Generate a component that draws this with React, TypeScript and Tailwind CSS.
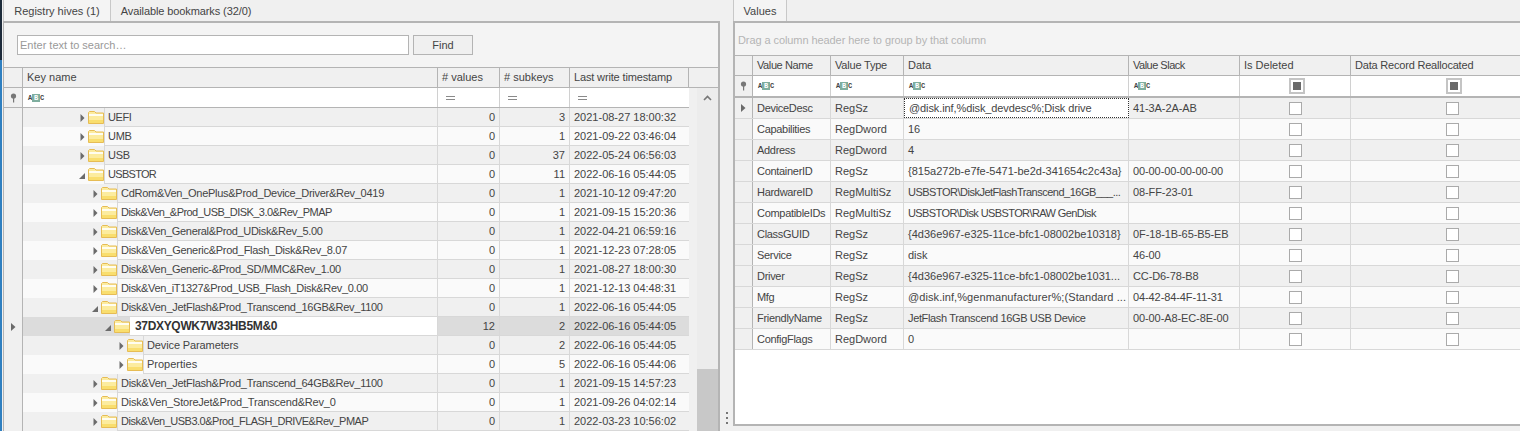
import React from 'react';

const font = "font-['Liberation_Sans',sans-serif]";

const keyRows = [
  { name: 'UEFI', level: 0, open: false, values: 0, subkeys: 3, ts: '2021-08-27 18:00:32', t: 'tracking-[-0.4px]' },
  { name: 'UMB', level: 0, open: false, values: 0, subkeys: 1, ts: '2021-09-22 03:46:04', t: 'tracking-[-0.3px]' },
  { name: 'USB', level: 0, open: false, values: 0, subkeys: 37, ts: '2022-05-24 06:56:03', t: 'tracking-[-0.3px]' },
  { name: 'USBSTOR', level: 0, open: true, values: 0, subkeys: 11, ts: '2022-06-16 05:44:05', t: 'tracking-[-0.7px]' },
  { name: 'CdRom&Ven_OnePlus&Prod_Device_Driver&Rev_0419', level: 1, open: false, values: 0, subkeys: 1, ts: '2021-10-12 09:47:20', t: 'tracking-[-0.27px]' },
  { name: 'Disk&Ven_&Prod_USB_DISK_3.0&Rev_PMAP', level: 1, open: false, values: 0, subkeys: 1, ts: '2021-09-15 15:20:36', t: 'tracking-[-0.55px]' },
  { name: 'Disk&Ven_General&Prod_UDisk&Rev_5.00', level: 1, open: false, values: 0, subkeys: 1, ts: '2022-04-21 06:59:16', t: 'tracking-[-0.33px]' },
  { name: 'Disk&Ven_Generic&Prod_Flash_Disk&Rev_8.07', level: 1, open: false, values: 0, subkeys: 1, ts: '2021-12-23 07:28:05', t: 'tracking-[-0.29px]' },
  { name: 'Disk&Ven_Generic-&Prod_SD/MMC&Rev_1.00', level: 1, open: false, values: 0, subkeys: 1, ts: '2021-08-27 18:00:30', t: 'tracking-[-0.31px]' },
  { name: 'Disk&Ven_iT1327&Prod_USB_Flash_Disk&Rev_0.00', level: 1, open: false, values: 0, subkeys: 1, ts: '2021-12-13 04:48:31', t: 'tracking-[-0.34px]' },
  { name: 'Disk&Ven_JetFlash&Prod_Transcend_16GB&Rev_1100', level: 1, open: true, values: 0, subkeys: 1, ts: '2022-06-16 05:44:05', t: 'tracking-[-0.28px]' },
  { name: '37DXYQWK7W33HB5M&0', level: 2, open: true, values: 12, subkeys: 2, ts: '2022-06-16 05:44:05', selected: true, t: 'tracking-[-0.33px]' },
  { name: 'Device Parameters', level: 3, open: false, values: 0, subkeys: 2, ts: '2022-06-16 05:44:05', t: 'tracking-[-0.12px]' },
  { name: 'Properties', level: 3, open: false, values: 0, subkeys: 5, ts: '2022-06-16 05:44:06', t: '' },
  { name: 'Disk&Ven_JetFlash&Prod_Transcend_64GB&Rev_1100', level: 1, open: false, values: 0, subkeys: 1, ts: '2021-09-15 14:57:23', t: 'tracking-[-0.28px]' },
  { name: 'Disk&Ven_StoreJet&Prod_Transcend&Rev_0', level: 1, open: false, values: 0, subkeys: 1, ts: '2021-09-26 04:02:14', t: 'tracking-[-0.2px]' },
  { name: 'Disk&Ven_USB3.0&Prod_FLASH_DRIVE&Rev_PMAP', level: 1, open: false, values: 0, subkeys: 1, ts: '2022-03-23 10:56:02', t: 'tracking-[-0.5px]' },
];

const valueRows = [
  ['DeviceDesc', 'RegSz', '@disk.inf,%disk_devdesc%;Disk drive', '41-3A-2A-AB', 'tracking-[-0.1px]'],
  ['Capabilities', 'RegDword', '16', '', ''],
  ['Address', 'RegDword', '4', '', ''],
  ['ContainerID', 'RegSz', '{815a272b-e7fe-5471-be2d-341654c2c43a}', '00-00-00-00-00-00', ''],
  ['HardwareID', 'RegMultiSz', 'USBSTOR\\DiskJetFlashTranscend_16GB___...', '08-FF-23-01', 'tracking-[-0.5px]'],
  ['CompatibleIDs', 'RegMultiSz', 'USBSTOR\\Disk USBSTOR\\RAW GenDisk', '', 'tracking-[-0.6px]'],
  ['ClassGUID', 'RegSz', '{4d36e967-e325-11ce-bfc1-08002be10318}', '0F-18-1B-65-B5-EB', ''],
  ['Service', 'RegSz', 'disk', '46-00', ''],
  ['Driver', 'RegSz', '{4d36e967-e325-11ce-bfc1-08002be1031...', 'CC-D6-78-B8', ''],
  ['Mfg', 'RegSz', '@disk.inf,%genmanufacturer%;(Standard ...', '04-42-84-4F-11-31', 'tracking-[0.08px]'],
  ['FriendlyName', 'RegSz', 'JetFlash Transcend 16GB USB Device', '00-00-A8-EC-8E-00', 'tracking-[-0.35px]'],
  ['ConfigFlags', 'RegDword', '0', '', ''],
];

const Folder = () => (
  <svg width="16" height="13" viewBox="0 0 16 13" className="shrink-0">
    <path d="M0.5 12.5V1.5L1.5 0.5H6.5L8 2H15.5V12.5Z" fill="#fcec9f" stroke="#e6bc55" />
    <rect x="1" y="3" width="14" height="2" fill="#fffdf0" />
    <rect x="1" y="9" width="14" height="3" fill="#f9de6e" />
  </svg>
);

const Arrow = ({ open }: { open: boolean }) =>
  open ? (
    <svg width="6" height="8" viewBox="0 0 6 8" className="shrink-0">
      <path d="M6 2V8H0Z" fill="#6b6b6b" />
    </svg>
  ) : (
    <svg width="5" height="8" viewBox="0 0 5 8" className="shrink-0">
      <path d="M0.5 0L4.5 4L0.5 8Z" fill="#6b6b6b" />
    </svg>
  );

const RowMark = () => (
  <svg width="5" height="8" viewBox="0 0 5 8">
    <path d="M0 0L4.5 4L0 8Z" fill="#6b6b6b" />
  </svg>
);

const AbcIcon = () => (
  <span className="flex items-center font-['Liberation_Mono',monospace] text-[7px] font-bold leading-[8px] text-[#444]">
    <span className="w-[4px] text-center">A</span>
    <span className="w-[8px] bg-[#7fae9f] text-center text-white">B</span>
    <span className="w-[4px] text-center">C</span>
  </span>
);

const Pin = () => (
  <svg width="7" height="10" viewBox="0 0 7 10">
    <circle cx="3.5" cy="3" r="2.6" fill="#777" />
    <rect x="3" y="5" width="1.2" height="4.5" fill="#777" />
  </svg>
);

const Equals = () => <span className="block h-[4px] w-[9px] border-y border-[#8a8a8a]" />;

const HeaderCell = ({ w, children }: { w: string; children?: React.ReactNode }) => (
  <div className={`flex shrink-0 items-center whitespace-nowrap border-r border-[#b4b4b4] pl-[4px] ${w}`}>
    {children}
  </div>
);

const KeysGrid = () => (
  <div className="flex min-h-0 flex-1 flex-col overflow-hidden">
    <div className="box-content flex h-[19px] shrink-0 border-y border-[#b4b4b4] bg-[#f0f0f0]">
      <HeaderCell w="w-[19px]" />
      <HeaderCell w="w-[415px]">Key name</HeaderCell>
      <HeaderCell w="w-[62px]">{'# values'}</HeaderCell>
      <HeaderCell w="w-[70px]">{'# subkeys'}</HeaderCell>
      <HeaderCell w="w-[119px] tracking-[-0.15px]">Last write timestamp</HeaderCell>
    </div>
    <div className="flex min-h-0 flex-1">
      <div className="w-[685px] shrink-0">
        <div className="flex h-[20px] border-b border-[#b4b4b4] bg-white">
          <div className="flex w-[19px] shrink-0 items-center justify-center border-r border-[#b4b4b4] bg-[#f0f0f0]"><Pin /></div>
          <div className="flex w-[415px] shrink-0 items-center border-r border-[#d0d0d0] pl-[5px]"><AbcIcon /></div>
          <div className="flex w-[62px] shrink-0 items-center border-r border-[#d0d0d0] pl-[8px]"><Equals /></div>
          <div className="flex w-[70px] shrink-0 items-center border-r border-[#d0d0d0] pl-[8px]"><Equals /></div>
          <div className="flex flex-1 items-center pl-[8px]"><Equals /></div>
        </div>
        {keyRows.map((r, i) => {
          const bg = r.selected ? 'bg-[#dcdcdc]' : i % 2 === 0 ? 'bg-[#f0f0f0]' : 'bg-[#fafafa]';
          return (
            <div key={r.name} className={`flex h-[19px] ${bg}`}>
              <div className="flex w-[19px] shrink-0 items-center justify-center border-r border-[#b4b4b4] bg-[#f0f0f0]">
                {r.selected && <RowMark />}
              </div>
              <div className="flex w-[415px] shrink-0 border-r border-[#d8d8d8]">
                <div
                  className="flex shrink-0 items-center justify-end gap-[3px]"
                  style={{ width: 81 + r.level * 13 }}
                >
                  <Arrow open={r.open} />
                  <Folder />
                </div>
                <div
                  className={`flex-1 truncate border-b border-l border-[#d8d8d8] leading-[18px] ${r.t} ${
                    r.selected ? 'border-l-0 bg-white pl-[5px] text-[12px] font-bold text-[#333]' : 'pl-[3px]'
                  }`}
                >
                  {r.name}
                </div>
              </div>
              <div className="w-[62px] shrink-0 border-b border-r border-[#d8d8d8] pr-[4px] text-right leading-[18px]">{r.values}</div>
              <div className="w-[70px] shrink-0 border-b border-r border-[#d8d8d8] pr-[4px] text-right leading-[18px]">{r.subkeys}</div>
              <div className="flex-1 border-b border-[#d8d8d8] pl-[4px] leading-[18px]">{r.ts}</div>
            </div>
          );
        })}
      </div>
      <div className="ml-[8px] flex w-[21px] shrink-0 flex-col bg-[#ececec]">
        <div className="flex h-[20px] shrink-0 items-center justify-center">
          <svg width="9" height="6" viewBox="0 0 9 6">
            <path d="M1 5L4.5 1.5L8 5" fill="none" stroke="#777" strokeWidth="1.6" />
          </svg>
        </div>
        <div className="flex-1" />
        <div className="h-[62px] shrink-0 bg-[#c8c8c8]" />
      </div>
    </div>
  </div>
);

const Check = () => <span className="ml-[49px] block h-[13px] w-[13px] border border-[#aaa] bg-white" />;

const CheckFilter = () => (
  <span className="ml-[49px] flex h-[16px] w-[16px] items-center justify-center border-2 border-[#c4c4c4] bg-white">
    <span className="block h-[8px] w-[8px] bg-[#6a6a6a]" />
  </span>
);

const vCols = ['w-[78px]', 'w-[73px]', 'w-[225px]', 'w-[111px]', 'w-[111px]', 'w-[203px]'];

const ValuesGrid = () => (
  <div className="flex min-h-0 flex-1 flex-col overflow-hidden bg-white">
    <div className="box-content flex h-[19px] shrink-0 border-y border-[#b4b4b4] bg-[#f0f0f0]">
      <HeaderCell w="w-[18px]" />
      <HeaderCell w={`${vCols[0]} tracking-[-0.4px]`}>Value Name</HeaderCell>
      <HeaderCell w={`${vCols[1]} tracking-[-0.2px]`}>Value Type</HeaderCell>
      <HeaderCell w={vCols[2]}>Data</HeaderCell>
      <HeaderCell w={`${vCols[3]} tracking-[-0.5px]`}>Value Slack</HeaderCell>
      <HeaderCell w={vCols[4]}>Is Deleted</HeaderCell>
      <HeaderCell w={`${vCols[5]} tracking-[-0.2px]`}>Data Record Reallocated</HeaderCell>
    </div>
    <div className="flex h-[22px] shrink-0 border-b-2 border-[#b4b4b4]">
      <div className="flex w-[18px] shrink-0 items-center justify-center border-r border-[#b4b4b4] bg-[#f0f0f0]"><Pin /></div>
      <div className={`flex shrink-0 items-center border-r border-[#d0d0d0] pl-[5px] ${vCols[0]}`}><AbcIcon /></div>
      <div className={`flex shrink-0 items-center border-r border-[#d0d0d0] pl-[5px] ${vCols[1]}`}><AbcIcon /></div>
      <div className={`flex shrink-0 items-center border-r border-[#d0d0d0] pl-[5px] ${vCols[2]}`}><AbcIcon /></div>
      <div className={`flex shrink-0 items-center border-r border-[#d0d0d0] pl-[5px] ${vCols[3]}`}><AbcIcon /></div>
      <div className={`flex shrink-0 items-center border-r border-[#d0d0d0] ${vCols[4]}`}><CheckFilter /></div>
      <div className={`flex shrink-0 items-center pl-[46px] ${vCols[5]}`}><CheckFilter /></div>
    </div>
    {valueRows.map((r, i) => {
      const bg = i % 2 === 0 ? 'bg-[#f0f0f0]' : 'bg-[#fafafa]';
      return (
        <div key={r[0]} className={`flex h-[21px] shrink-0 border-b border-[#d8d8d8] leading-[20px] ${bg}`}>
          <div className="flex w-[18px] shrink-0 items-center justify-center border-r border-[#b4b4b4] bg-[#f0f0f0]">
            {i === 0 && <RowMark />}
          </div>
          <div className={`shrink-0 overflow-hidden whitespace-nowrap border-r border-[#d8d8d8] pl-[4px] tracking-[-0.3px] ${vCols[0]}`}>{r[0]}</div>
          <div className={`shrink-0 overflow-hidden whitespace-nowrap border-r border-[#d8d8d8] pl-[4px] ${vCols[1]}`}>{r[1]}</div>
          <div className={`shrink-0 overflow-hidden whitespace-nowrap pl-[4px] ${r[4]} ${vCols[2]} ${i === 0 ? 'border border-dotted border-[#333] bg-white leading-[18px]' : 'border-r border-[#d8d8d8]'}`}>{r[2]}</div>
          <div className={`shrink-0 overflow-hidden whitespace-nowrap border-r border-[#d8d8d8] pl-[4px] tracking-[-0.1px] ${vCols[3]}`}>{r[3]}</div>
          <div className={`flex shrink-0 items-center border-r border-[#d8d8d8] ${vCols[4]}`}><Check /></div>
          <div className={`flex shrink-0 items-center pl-[46px] ${vCols[5]}`}><Check /></div>
        </div>
      );
    })}
  </div>
);

export default function App() {
  return (
    <div className={`flex h-[431px] w-[1520px] overflow-hidden bg-[#f0f0f0] text-[11px] text-[#444] ${font}`}>
      <div className="flex w-[3px] shrink-0 flex-col pr-[1px]">
        <div className="h-[60px] bg-[#1d2b3a]" />
        <div className="flex-1 bg-[#2f7fc0]" />
      </div>
      <div className="flex w-[717px] shrink-0 flex-col">
        <div className="flex h-[23px] shrink-0 items-end border-b-2 border-[#b4b4b4]">
          <div className="flex h-[23px] w-[108px] items-center justify-center whitespace-nowrap border-x border-t border-[#c8c8c8] bg-[#f4f4f4] pt-[2px]">Registry hives (1)</div>
          <div className="flex h-[21px] w-[150px] items-center justify-center whitespace-nowrap pt-[1px] tracking-[-0.1px]">Available bookmarks (32/0)</div>
        </div>
        <div className="flex min-h-0 flex-1 flex-col border-l border-r-2 border-[#b4b4b4]">
          <div className="flex h-[44px] shrink-0 items-center gap-[4px] bg-[#f4f4f4] pl-[13px]">
            <div className="flex h-[20px] w-[392px] items-center border border-[#b4b4b4] bg-white pl-[2px] text-[#999]">{'Enter text to search…'}</div>
            <div className="flex h-[20px] w-[60px] items-center justify-center border border-[#b4b4b4] bg-[#f0f0f0]">Find</div>
          </div>
          <KeysGrid />
        </div>
      </div>
      <div className="flex w-[13px] shrink-0 flex-col items-center justify-end pb-[7px]">
        <div className="flex flex-col gap-[3px]">
          <span className="h-[2px] w-[2px] bg-[#777]" />
          <span className="h-[2px] w-[2px] bg-[#777]" />
          <span className="h-[2px] w-[2px] bg-[#777]" />
        </div>
      </div>
      <div className="flex min-w-0 flex-1 flex-col pb-[5px]">
        <div className="flex h-[23px] shrink-0 items-end border-b-2 border-[#b4b4b4]">
          <div className="flex h-[23px] w-[54px] items-center justify-center border-x border-t border-[#c8c8c8] bg-[#f4f4f4] pt-[2px]">Values</div>
        </div>
        <div className="flex min-h-0 flex-1 flex-col border-b-2 border-l-2 border-[#b4b4b4]">
          <div className="flex h-[32px] shrink-0 items-center bg-[#f4f4f4] pl-[3px] pt-[2px] tracking-[-0.08px] text-[#b4b4b4]">Drag a column header here to group by that column</div>
          <ValuesGrid />
        </div>
      </div>
    </div>
  );
}
